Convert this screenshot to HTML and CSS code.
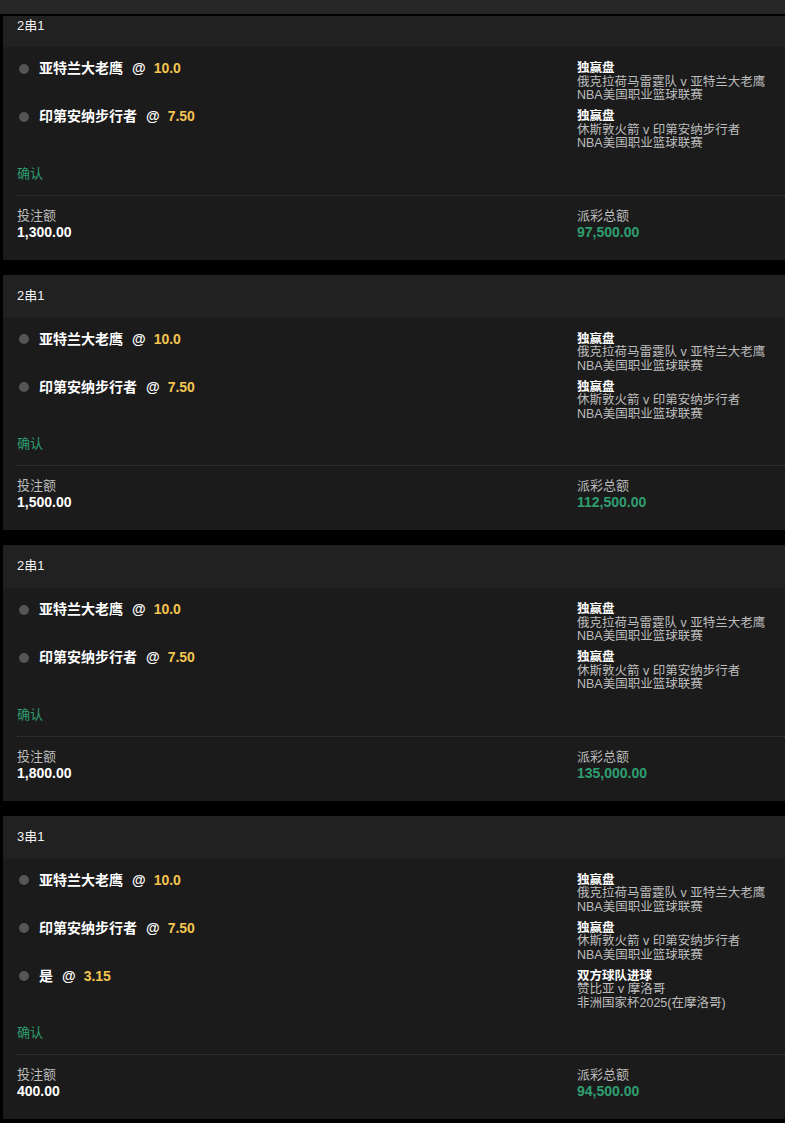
FILE: index.html
```html
<!DOCTYPE html>
<html lang="zh-CN">
<head>
<meta charset="utf-8">
<title>投注记录</title>
<link rel="stylesheet" href="styles.css">
</head>
<body>
<div class="topbar"></div>
<div class="list">

  <section class="card card-first">
    <div class="card-head">2串1</div>
    <div class="card-body">
      <div class="sel">
        <div class="sel-pick"><span class="dot"></span><span class="name">亚特兰大老鹰</span><span class="at">@</span><span class="odds">10.0</span></div>
        <div class="sel-info"><div class="market">独赢盘</div><div class="sub">俄克拉荷马雷霆队 v 亚特兰大老鹰</div><div class="sub">NBA美国职业篮球联赛</div></div>
      </div>
      <div class="sel">
        <div class="sel-pick"><span class="dot"></span><span class="name">印第安纳步行者</span><span class="at">@</span><span class="odds">7.50</span></div>
        <div class="sel-info"><div class="market">独赢盘</div><div class="sub">休斯敦火箭 v 印第安纳步行者</div><div class="sub">NBA美国职业篮球联赛</div></div>
      </div>
      <div class="status">确认</div>
    </div>
    <div class="card-foot">
      <div><div class="label">投注额</div><div class="amount">1,300.00</div></div>
      <div><div class="label">派彩总额</div><div class="amount win">97,500.00</div></div>
    </div>
  </section>

  <section class="card">
    <div class="card-head">2串1</div>
    <div class="card-body">
      <div class="sel">
        <div class="sel-pick"><span class="dot"></span><span class="name">亚特兰大老鹰</span><span class="at">@</span><span class="odds">10.0</span></div>
        <div class="sel-info"><div class="market">独赢盘</div><div class="sub">俄克拉荷马雷霆队 v 亚特兰大老鹰</div><div class="sub">NBA美国职业篮球联赛</div></div>
      </div>
      <div class="sel">
        <div class="sel-pick"><span class="dot"></span><span class="name">印第安纳步行者</span><span class="at">@</span><span class="odds">7.50</span></div>
        <div class="sel-info"><div class="market">独赢盘</div><div class="sub">休斯敦火箭 v 印第安纳步行者</div><div class="sub">NBA美国职业篮球联赛</div></div>
      </div>
      <div class="status">确认</div>
    </div>
    <div class="card-foot">
      <div><div class="label">投注额</div><div class="amount">1,500.00</div></div>
      <div><div class="label">派彩总额</div><div class="amount win">112,500.00</div></div>
    </div>
  </section>

  <section class="card">
    <div class="card-head">2串1</div>
    <div class="card-body">
      <div class="sel">
        <div class="sel-pick"><span class="dot"></span><span class="name">亚特兰大老鹰</span><span class="at">@</span><span class="odds">10.0</span></div>
        <div class="sel-info"><div class="market">独赢盘</div><div class="sub">俄克拉荷马雷霆队 v 亚特兰大老鹰</div><div class="sub">NBA美国职业篮球联赛</div></div>
      </div>
      <div class="sel">
        <div class="sel-pick"><span class="dot"></span><span class="name">印第安纳步行者</span><span class="at">@</span><span class="odds">7.50</span></div>
        <div class="sel-info"><div class="market">独赢盘</div><div class="sub">休斯敦火箭 v 印第安纳步行者</div><div class="sub">NBA美国职业篮球联赛</div></div>
      </div>
      <div class="status">确认</div>
    </div>
    <div class="card-foot">
      <div><div class="label">投注额</div><div class="amount">1,800.00</div></div>
      <div><div class="label">派彩总额</div><div class="amount win">135,000.00</div></div>
    </div>
  </section>

  <section class="card">
    <div class="card-head">3串1</div>
    <div class="card-body">
      <div class="sel">
        <div class="sel-pick"><span class="dot"></span><span class="name">亚特兰大老鹰</span><span class="at">@</span><span class="odds">10.0</span></div>
        <div class="sel-info"><div class="market">独赢盘</div><div class="sub">俄克拉荷马雷霆队 v 亚特兰大老鹰</div><div class="sub">NBA美国职业篮球联赛</div></div>
      </div>
      <div class="sel">
        <div class="sel-pick"><span class="dot"></span><span class="name">印第安纳步行者</span><span class="at">@</span><span class="odds">7.50</span></div>
        <div class="sel-info"><div class="market">独赢盘</div><div class="sub">休斯敦火箭 v 印第安纳步行者</div><div class="sub">NBA美国职业篮球联赛</div></div>
      </div>
      <div class="sel">
        <div class="sel-pick"><span class="dot"></span><span class="name">是</span><span class="at">@</span><span class="odds">3.15</span></div>
        <div class="sel-info"><div class="market">双方球队进球</div><div class="sub">赞比亚 v 摩洛哥</div><div class="sub">非洲国家杯2025(在摩洛哥)</div></div>
      </div>
      <div class="status">确认</div>
    </div>
    <div class="card-foot">
      <div><div class="label">投注额</div><div class="amount">400.00</div></div>
      <div><div class="label">派彩总额</div><div class="amount win">94,500.00</div></div>
    </div>
  </section>

</div>
</body>
</html>
```

FILE: styles.css
```css
* { box-sizing: border-box; }
html, body {
  margin: 0;
  padding: 0;
  background: #000;
}
body {
  font-family: "Liberation Sans", "Noto Sans CJK SC", Arial, sans-serif;
  color: #fff;
  font-size: 13px;
}
.topbar {
  height: 16px;
  background: #262626;
  border-bottom: 2px solid #000;
}
.list {
  display: flex;
  flex-direction: column;
  gap: 15px;
  padding-left: 3px;
}
.card {
  background: #1b1b1b;
}
.card-head {
  background: #212121;
  padding: 13px 14px 14px;
  font-size: 13px;
  line-height: 16px;
  color: #f2f2f2;
}
.card-first .card-head {
  padding-top: 2px;
  padding-bottom: 13px;
}
.card-body {
  padding: 15px 0 0 14px;
  display: flex;
  flex-direction: column;
  gap: 7.5px;
}
.sel {
  display: grid;
  grid-template-columns: 560px 1fr;
  align-items: start;
}
.sel-pick {
  display: flex;
  align-items: center;
  font-weight: bold;
  font-size: 14px;
  line-height: 13.5px;
}
.dot {
  width: 10px;
  height: 10px;
  border-radius: 50%;
  background: #555;
  margin: 0 10px 0 2px;
}
.name { color: #fff; }
.at { color: #fff; margin-left: 9px; }
.odds { color: #f3c44f; margin-left: 8px; }
.sel-info {
  font-size: 12.5px;
  line-height: 13.5px;
}
.market {
  font-weight: bold;
  color: #fff;
}
.sub {
  color: #bdbdbd;
}
.status {
  color: #2f9e70;
  line-height: 16px;
  margin-top: 7.5px;
}
.card-foot {
  margin-left: 14px;
  margin-top: 13px;
  border-top: 1px dotted #3a3a3a;
  padding: 12px 0 20px;
  display: grid;
  grid-template-columns: 560px 1fr;
}
.label {
  color: #bdbdbd;
  line-height: 16px;
}
.amount {
  font-weight: bold;
  font-size: 14px;
  line-height: 16px;
  color: #fff;
}
.amount.win {
  color: #2f9e70;
}
```
